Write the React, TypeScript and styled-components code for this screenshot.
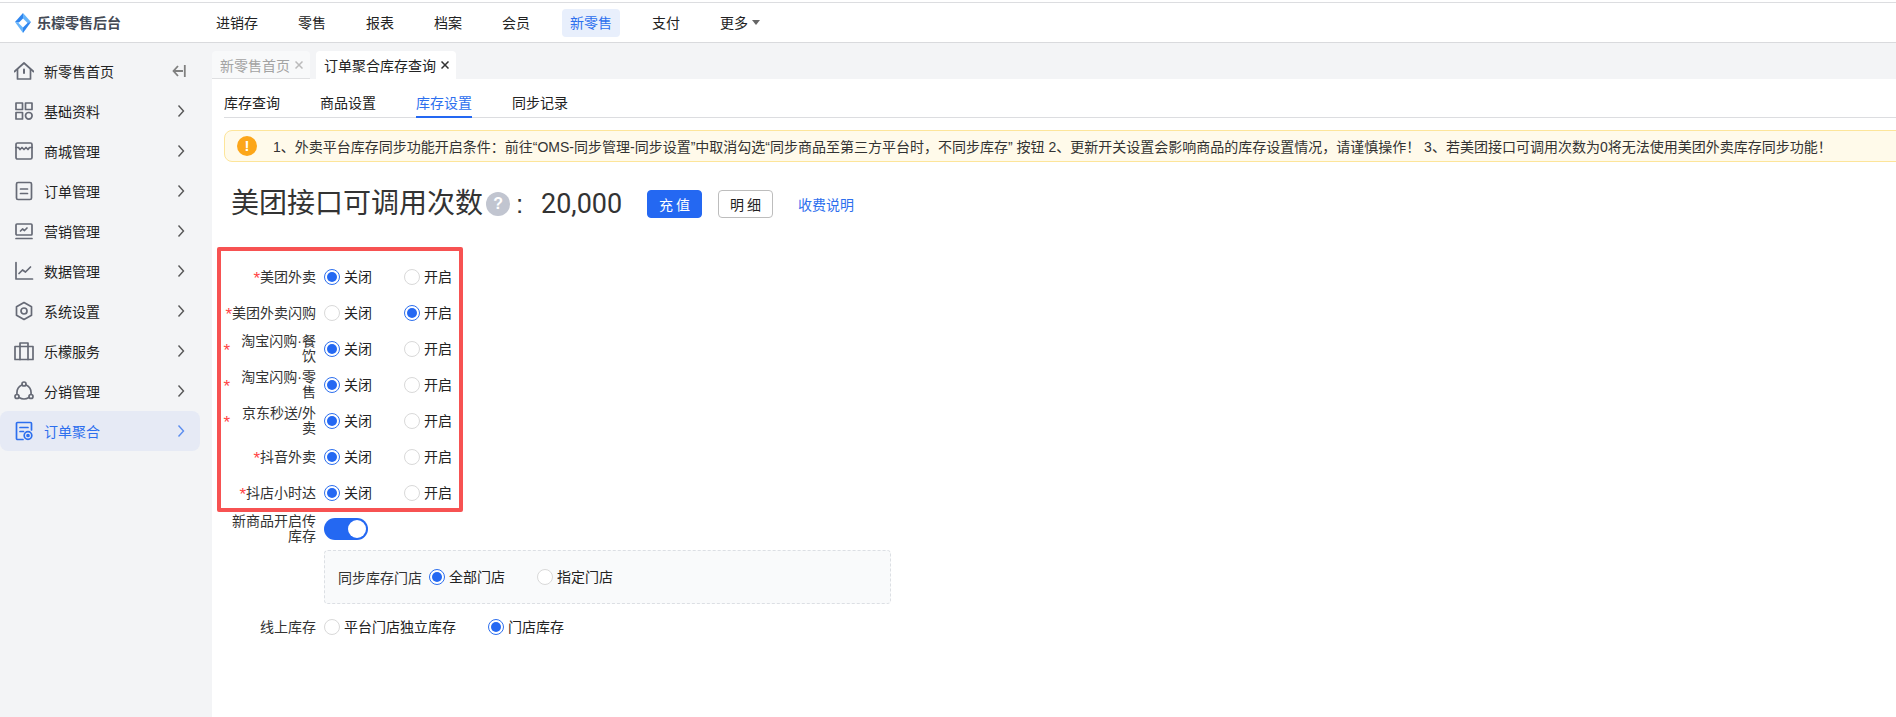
import React from "react";
import styled, { createGlobalStyle } from "styled-components";

const Global = createGlobalStyle`
  html, body { margin: 0; padding: 0; background: #fff; overflow: hidden; }
  * { box-sizing: border-box; }
  body { font-family: "Liberation Sans", "Noto Sans CJK SC", sans-serif; font-size: 14px; color: #222; }
`;

const Page = styled.div`
  width: 1896px; height: 717px; display: flex; flex-direction: column; overflow: hidden; background: #f3f4f6;
`;
const TopLine = styled.div`
  height: 3px; flex: none; background: #fff; border-bottom: 1px solid #dcdde0;
`;
const Header = styled.header`
  height: 40px; flex: none; display: flex; align-items: center; background: #fff; border-bottom: 1px solid #d9dadd;
`;
const Brand = styled.div`
  width: 208px; flex: none; display: flex; align-items: center; gap: 6px; padding-left: 15px;
  font-size: 14px; font-weight: 700; color: #444a55; line-height: 20px;
`;
const Nav = styled.nav`
  display: flex; align-items: center; gap: 24px;
`;
const NavItem = styled.div<{ $active?: boolean }>`
  height: 28px; padding: 0 8px; display: flex; align-items: center; gap: 4px; border-radius: 4px;
  line-height: 28px; white-space: nowrap;
  color: ${(p) => (p.$active ? "#2d6fee" : "#222")};
  background: ${(p) => (p.$active ? "#e8effc" : "transparent")};
`;
const Caret = styled.i`
  width: 0; height: 0; border-left: 4px solid transparent; border-right: 4px solid transparent; border-top: 5px solid #666;
`;
const Body = styled.div`
  flex: 1; display: flex; min-height: 0;
`;
const Sidebar = styled.aside`
  width: 212px; flex: none; padding-top: 8px; display: flex; flex-direction: column;
`;
const SideItem = styled.div<{ $active?: boolean }>`
  width: 200px; height: 40px; flex: none; display: flex; align-items: center; gap: 10px; padding: 0 15px 0 14px; border-radius: 8px;
  color: ${(p) => (p.$active ? "#2d6fee" : "#222")};
  background: ${(p) => (p.$active ? "#e6eaf5" : "transparent")};
  svg { flex: none; }
`;
const SideLabel = styled.span`
  flex: 1; padding-top: 1px; line-height: 20px; white-space: nowrap;
`;
const Main = styled.main`
  flex: 1; min-width: 0; display: flex; flex-direction: column;
`;
const TabBar = styled.div`
  height: 36px; flex: none; display: flex; align-items: flex-end; gap: 6px;
`;
const Tab = styled.div<{ $active?: boolean }>`
  height: 28px; padding: 0 7px 0 8px; display: flex; align-items: center; gap: 5px; border-radius: 4px 4px 0 0; white-space: nowrap;
  color: ${(p) => (p.$active ? "#222" : "#a3a3a3")};
  background: ${(p) => (p.$active ? "#fff" : "#f8f9fa")};
  border-bottom: ${(p) => (p.$active ? "none" : "1px solid #dfe0e2")};
`;
const Content = styled.div`
  flex: 1; background: #fff; padding-left: 12px; min-width: 0;
`;
const SubTabs = styled.div`
  height: 39px; display: flex; gap: 40px; border-bottom: 1px solid #dcdde0;
`;
const SubTab = styled.div<{ $active?: boolean }>`
  height: 39px; padding-top: 14px; line-height: 20px; white-space: nowrap;
  color: ${(p) => (p.$active ? "#2d6fee" : "#222")};
  border-bottom: ${(p) => (p.$active ? "2px solid #2468f2" : "none")};
`;
const Alert = styled.div`
  margin: 12px -8px 0 0; height: 32px; display: flex; align-items: center; gap: 16px; padding-left: 12px;
  background: #fffaea; border: 1px solid #fde59a; border-radius: 8px; white-space: nowrap; color: #333; overflow: hidden;
`;
const AlertIcon = styled.span`
  width: 20px; height: 20px; flex: none; border-radius: 50%; background: #fca61a; color: #fff;
  display: flex; align-items: center; justify-content: center; font-weight: 700; font-size: 15px; line-height: 20px;
`;
const QuotaRow = styled.div`
  margin: 28px 0 0 7px; height: 28px; display: flex; align-items: center;
`;
const QuotaTitle = styled.span`
  font-size: 28px; line-height: 28px; color: #333; white-space: nowrap;
`;
const Help = styled.span`
  width: 24px; height: 24px; margin: 0 0 0 3px; flex: none; border-radius: 50%; background: #c1c5d0; color: #fff;
  display: flex; align-items: center; justify-content: center; font-weight: 700; font-size: 16px;
`;
const Colon = styled.span`
  font-size: 26px; line-height: 28px; color: #333; width: 31px; padding-left: 6px; flex: none;
`;
const QuotaValue = styled.span`
  font-size: 27px; line-height: 28px; color: #333; width: 106px; flex: none; font-family: "Roboto", sans-serif;
`;
const Btn = styled.button<{ $primary?: boolean }>`
  width: 55px; height: 28px; margin-right: 16px; flex: none; padding: 0; border-radius: 4px; font: inherit; letter-spacing: 3px; text-indent: 3px;
  color: ${(p) => (p.$primary ? "#fff" : "#222")};
  background: ${(p) => (p.$primary ? "#2468f2" : "#fff")};
  border: 1px solid ${(p) => (p.$primary ? "#2468f2" : "#bdbdbd")};
`;
const LinkText = styled.a`
  color: #2d6fee; margin-left: 9px; white-space: nowrap;
`;
const HighlightBox = styled.div`
  margin: 29px 0 0 -7px; width: 246px; height: 265px; padding: 11px 0 0; border: 4px solid #f75252; border-radius: 2px;
  display: flex; flex-direction: column; gap: 6px;
`;
const FormRow = styled.div`
  height: 30px; display: flex; align-items: center; gap: 8px;
`;
const ReqLabel = styled.div`
  width: 95px; flex: none; display: flex; align-items: center; justify-content: flex-end; text-align: right; line-height: 15px; color: #333;
`;
const Star = styled.span`
  color: #f44; flex: none; width: 9px; font-size: 17px; font-family: "Liberation Sans", sans-serif; line-height: 14px; padding-top: 4px;
`;
const RadioGroup = styled.div`
  display: flex; align-items: center; gap: 32px;
`;
const RadioItem = styled.label`
  display: flex; align-items: center; gap: 4px; white-space: nowrap; line-height: 20px; color: #222;
`;
const RadioDot = styled.span<{ $on?: boolean }>`
  width: 16px; height: 16px; flex: none; border-radius: 50%; background: #fff; display: flex; align-items: center; justify-content: center;
  border: 1px solid ${(p) => (p.$on ? "#2d6fee" : "#d9d9d9")};
  &::after { content: ""; width: 10px; height: 10px; border-radius: 50%; background: ${(p) => (p.$on ? "#2468f2" : "transparent")}; }
`;
const Row = styled.div<{ $top: number }>`
  margin-top: ${(p) => p.$top}px; display: flex; align-items: center; gap: 8px;
`;
const PlainLabel = styled.div`
  width: 92px; flex: none; text-align: right; line-height: 15px; color: #333;
`;
const Toggle = styled.span`
  width: 44px; height: 22px; border-radius: 11px; background: #2468f2; display: flex; align-items: center; justify-content: flex-end; padding-right: 2px; flex: none;
  &::after { content: ""; width: 18px; height: 18px; border-radius: 50%; background: #fff; }
`;
const DashedBox = styled.div`
  margin: 6px 0 0 100px; width: 567px; height: 54px; padding-left: 13px; display: flex; align-items: center; gap: 7px;
  background: #f9fafb; border: 1px dashed #dcdfe4; border-radius: 4px; color: #333;
`;

const stroke = { fill: "none", stroke: "currentColor", strokeWidth: 1.7, strokeLinecap: "round", strokeLinejoin: "round" } as const;

const I = ({ children, active }: { children: React.ReactNode; active?: boolean }) => (
  <svg width="20" height="20" viewBox="0 0 20 20" style={{ color: active ? "#2d6fee" : "#666a76" }} {...stroke}>
    {children}
  </svg>
);
const icons: Record<string, React.ReactNode> = {
  home: (<><path d="M0.5 10.5 10 2l9.5 8.5" /><path d="M3.5 8.5V18h13V8.5" /><path d="M10 8.5v3.5" strokeWidth={2} /></>),
  grid: (<><rect x="2" y="2" width="6.5" height="6.5" /><rect x="11.5" y="2" width="6.5" height="6.5" /><rect x="2" y="11.5" width="6.5" height="6.5" /><circle cx="14.8" cy="14.8" r="3.3" /></>),
  store: (<><rect x="2" y="2" width="16" height="16" rx="1.5" /><path d="M2 6.5h2.5l1.5 2 2-2 2 2 2-2 2 2 1.5-2H18" /></>),
  order: (<><rect x="2.5" y="1.5" width="15" height="17" rx="1.5" /><path d="M6.5 8h7M6.5 12.5h7" /></>),
  market: (<><rect x="2" y="3" width="16" height="11" rx="1" /><path d="M6.5 10l2-2 2 1.5 2.5-2.5" /><path d="M2 17.5h16" /></>),
  chart: (<><path d="M2 1.5V18h16.5" /><path d="M5 12.5l3.5-3.5 3 2 5-5" /></>),
  hex: (<><path d="M10 1.5l7.5 4.2v8.6L10 18.5l-7.5-4.2V5.7z" /><circle cx="10" cy="10" r="3" /></>),
  bag: (<><rect x="1" y="5.5" width="18" height="13" /><path d="M6 18.5V2h8v16.5" /></>),
  share: (<><circle cx="10" cy="3" r="2" /><circle cx="3" cy="15.5" r="2" /><circle cx="17" cy="15.5" r="2" /><path d="M7.8 4C4.5 5.5 2.5 9 3 13.5M12.2 4c3.3 1.5 5.3 5 4.8 9.5M5 16.5c3 1.8 7 1.8 10 0" /></>),
  agg: (<><path d="M9 18.5H3.5a1 1 0 0 1-1-1v-15a1 1 0 0 1 1-1h13a1 1 0 0 1 1 1V9" /><path d="M6 6.5h8M6 10.5h3.5" /><circle cx="14" cy="14.5" r="3.8" /><circle cx="14" cy="14.5" r="1" /></>),
};

const Chevron = () => (
  <svg width="8" height="14" viewBox="0 0 8 14" fill="none" stroke="currentColor" strokeWidth="1.4" style={{ opacity: 0.75 }}>
    <path d="M1.5 1.5 6.5 7l-5 5.5" />
  </svg>
);
const Collapse = () => (
  <svg width="14" height="14" viewBox="0 0 14 14" fill="none" stroke="#808080" strokeWidth="1.8" style={{ marginRight: -1 }}>
    <path d="M6 2 1.5 7 6 12M1.5 7h9.5M12.8 1v12" />
  </svg>
);
const Close = ({ color }: { color: string }) => (
  <svg width="8" height="8" viewBox="0 0 8 8" stroke={color} strokeWidth="1.5"><path d="M0.5 0.5l7 7M7.5 0.5l-7 7" /></svg>
);
const Logo = () => (
  <svg width="16" height="20" viewBox="0 0 16 20">
    <path d="M8 0 0 9l8 1z" fill="#2f86ef" />
    <path d="M8 0l8 9-8 1z" fill="#66b4fb" />
    <path d="M0 9l8 11v-10z" fill="#66b4fb" />
    <path d="M16 9 8 20v-10z" fill="#2f86ef" />
    <path d="M8 5.5 12.5 10 8 14.5 3.5 10z" fill="#fff" />
  </svg>
);

const Radio = ({ on, children }: { on?: boolean; children: React.ReactNode }) => (
  <RadioItem><RadioDot $on={on} />{children}</RadioItem>
);
const OnOff = ({ on }: { on?: boolean }) => (
  <RadioGroup>
    <Radio on={!on}>关闭</Radio>
    <Radio on={on}>开启</Radio>
  </RadioGroup>
);

const side = [
  ["home", "新零售首页"], ["grid", "基础资料"], ["store", "商城管理"], ["order", "订单管理"], ["market", "营销管理"],
  ["chart", "数据管理"], ["hex", "系统设置"], ["bag", "乐檬服务"], ["share", "分销管理"], ["agg", "订单聚合"],
];
const rows: [string, boolean?][] = [
  ["美团外卖"], ["美团外卖闪购", true], ["淘宝闪购·餐饮"], ["淘宝闪购·零售"], ["京东秒送/外卖"], ["抖音外卖"], ["抖店小时达"],
];

export default function App() {
  return (
    <Page>
      <Global />
      <TopLine />
      <Header>
        <Brand><Logo />乐檬零售后台</Brand>
        <Nav>
          <NavItem>进销存</NavItem>
          <NavItem>零售</NavItem>
          <NavItem>报表</NavItem>
          <NavItem>档案</NavItem>
          <NavItem>会员</NavItem>
          <NavItem $active>新零售</NavItem>
          <NavItem>支付</NavItem>
          <NavItem>更多<Caret /></NavItem>
        </Nav>
      </Header>
      <Body>
        <Sidebar>
          {side.map(([k, t], i) => (
            <SideItem key={k} $active={i === 9}>
              <I active={i === 9}>{icons[k]}</I>
              <SideLabel>{t}</SideLabel>
              {i === 0 ? <Collapse /> : <Chevron />}
            </SideItem>
          ))}
        </Sidebar>
        <Main>
          <TabBar>
            <Tab>新零售首页<Close color="#bbb" /></Tab>
            <Tab $active>订单聚合库存查询<Close color="#333" /></Tab>
          </TabBar>
          <Content>
            <SubTabs>
              <SubTab>库存查询</SubTab>
              <SubTab>商品设置</SubTab>
              <SubTab $active>库存设置</SubTab>
              <SubTab>同步记录</SubTab>
            </SubTabs>
            <Alert>
              <AlertIcon>!</AlertIcon>
              <span>1、外卖平台库存同步功能开启条件：前往“OMS-同步管理-同步设置”中取消勾选“同步商品至第三方平台时，不同步库存” 按钮 2、更新开关设置会影响商品的库存设置情况，请谨慎操作！ 3、若美团接口可调用次数为0将无法使用美团外卖库存同步功能！</span>
            </Alert>
            <QuotaRow>
              <QuotaTitle>美团接口可调用次数</QuotaTitle>
              <Help>?</Help>
              <Colon>:</Colon>
              <QuotaValue>20,000</QuotaValue>
              <Btn $primary>充值</Btn>
              <Btn>明细</Btn>
              <LinkText>收费说明</LinkText>
            </QuotaRow>
            <HighlightBox>
              {rows.map(([t, on]) => (
                <FormRow key={t}>
                  <ReqLabel><Star>*</Star><span>{t}</span></ReqLabel>
                  <OnOff on={on} />
                </FormRow>
              ))}
            </HighlightBox>
            <Row $top={2}>
              <PlainLabel>新商品开启传库存</PlainLabel>
              <Toggle />
            </Row>
            <DashedBox>
              同步库存门店
              <RadioGroup>
                <Radio on>全部门店</Radio>
                <Radio>指定门店</Radio>
              </RadioGroup>
            </DashedBox>
            <Row $top={13}>
              <PlainLabel>线上库存</PlainLabel>
              <RadioGroup>
                <Radio>平台门店独立库存</Radio>
                <Radio on>门店库存</Radio>
              </RadioGroup>
            </Row>
          </Content>
        </Main>
      </Body>
    </Page>
  );
}
